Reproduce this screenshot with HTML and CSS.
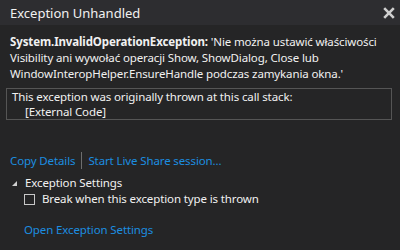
FILE: index.html
```html
<!DOCTYPE html>
<html>
<head>
<meta charset="utf-8">
<link rel="stylesheet" href="styles.css">
</head>
<body>
<div class="window">
  <div class="titlebar">
    <span class="title">Exception Unhandled</span>
    <svg class="close" width="12" height="12" viewBox="0 0 12 12"><path d="M1.2 1.2 L10.8 10.8 M10.8 1.2 L1.2 10.8" stroke="#cfcfcf" stroke-width="2.6" fill="none"/></svg>
  </div>
  <div class="content">
    <p class="message"><b>System.InvalidOperationException:</b> 'Nie można ustawić właściwości Visibility ani wywołać operacji Show, ShowDialog, Close lub WindowInteropHelper.EnsureHandle podczas zamykania okna.'</p>
    <div class="stack">
      <div>This exception was originally thrown at this call stack:</div>
      <div class="frame">[External Code]</div>
    </div>
    <div class="links">
      <a class="link">Copy Details</a>
      <span class="sep"></span>
      <a class="link">Start Live Share session...</a>
    </div>
    <div class="settings">
      <div class="settings-head"><span class="tri"></span>Exception Settings</div>
      <label class="check"><span class="box"></span>Break when this exception type is thrown</label>
    </div>
    <a class="link open">Open Exception Settings</a>
  </div>
</div>
</body>
</html>
```
FILE: styles.css
```css
* { box-sizing: border-box; }
html, body { margin: 0; padding: 0; }
body {
  width: 400px;
  height: 250px;
  background: #252526;
  font-family: "Noto Sans", "Open Sans", sans-serif;
  font-size: 11.5px;
  letter-spacing: -0.12px;
  color: #f1f1f1;
}
.window {
  width: 400px;
  height: 250px;
  background: #252526;
  display: flex;
  flex-direction: column;
}
.titlebar {
  height: 25px;
  flex: 0 0 25px;
  background: #2d2d30;
  display: flex;
  align-items: center;
  justify-content: space-between;
  padding: 0 5px 0 10px;
}
.title { color: #f1f1f1; font-size: 13px; letter-spacing: 0; }
.close { display: block; margin-top: 1px; }
.content {
  padding: 9px 10px 0 10px;
  line-height: 16px;
}
.message { margin: 0; }
.message b { font-weight: 700; }
.stack {
  margin: 6px -2px 0 -4px;
  border: 1px solid #555555;
  padding: 0 5px;
  line-height: 15px;
}
.frame { padding-left: 13px; }
.links {
  margin-top: 32px;
  display: flex;
  align-items: center;
  gap: 6px;
}
.link { color: #1c8ee0; text-decoration: none; }
.sep { width: 1px; height: 17px; background: #6e6e6e; }
.settings { margin-top: 6px; }
.settings-head { display: flex; align-items: center; }
.tri {
  width: 0; height: 0;
  border-left: 5px solid transparent;
  border-bottom: 5px solid #d0d0d0;
  margin: 0 8px 0 2px;
}
.check { display: flex; align-items: center; padding-left: 14px; }
.box {
  width: 11px; height: 11px;
  border: 1px solid #c8c8c8;
  margin-right: 7px;
}
.open { display: block; margin-top: 15px; padding-left: 14px; }
```
